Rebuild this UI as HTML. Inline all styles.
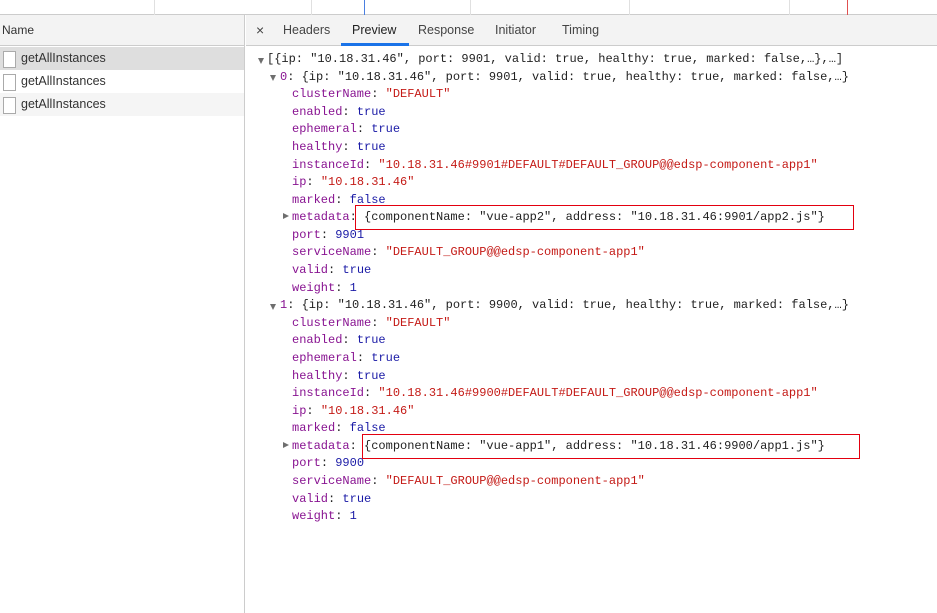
<!DOCTYPE html>
<html><head><meta charset="utf-8"><style>
*{margin:0;padding:0;box-sizing:border-box}
body{width:937px;height:613px;overflow:hidden;background:#fff;font-family:"Liberation Sans",sans-serif;position:relative}
.top{position:absolute;left:0;top:0;width:937px;height:15px;border-bottom:1px solid #ccc;background:#fff}
.vl{position:absolute;top:0;height:15px;width:1px;background:#e0e0e0}
.left{position:absolute;left:0;top:15px;width:245px;height:598px;border-right:1px solid #ccc}
.lh{height:31px;border-bottom:1px solid #ccc;font-size:12px;line-height:31px;padding-left:2px;color:#333;background:#f3f3f3}
.row{height:23px;font-size:12.5px;line-height:23px;color:#333;position:relative;padding-left:21px}
.row:before{content:"";position:absolute;left:3px;top:4px;width:11px;height:15px;border:1px solid #aaa;background:#fff}
.tabs{position:absolute;left:246px;top:15px;right:0;height:31px;border-bottom:1px solid #ccc;background:#f3f3f3;font-size:12.5px;color:#444}
.tab{position:absolute;top:0;line-height:31px}
.l{position:absolute;font-family:"Liberation Mono",monospace;font-size:12px;line-height:17.58px;white-space:pre;color:#222}
.k{color:#881391}.s{color:#c41a16}.n{color:#1a1aa6}
.tri{position:absolute;width:0;height:0}
.dn{border-left:3.5px solid transparent;border-right:3.5px solid transparent;border-top:6px solid #6e6e6e}
.rt{border-top:3.5px solid transparent;border-bottom:3.5px solid transparent;border-left:6px solid #6e6e6e}
.box{position:absolute;border:1px solid #e3000f}
</style></head><body>
<div class="top">
<div class="vl" style="left:154px"></div><div class="vl" style="left:311px"></div><div class="vl" style="left:364px;background:#4a7fe0"></div><div class="vl" style="left:470px"></div><div class="vl" style="left:629px"></div><div class="vl" style="left:789px"></div><div class="vl" style="left:847px;background:#e05050"></div>
</div>
<div class="left">
<div class="lh">Name</div>
<div class="row" style="background:#dedede;margin-top:1px">getAllInstances</div>
<div class="row">getAllInstances</div>
<div class="row" style="background:#f5f5f5">getAllInstances</div>
</div>
<div class="tabs">
<span class="tab" style="left:10px;font-size:14px">×</span>
<span class="tab" style="left:37px">Headers</span>
<span class="tab" style="left:106px;color:#222">Preview</span>
<div style="position:absolute;left:95px;top:28px;width:68px;height:3px;background:#1a73e8"></div>
<span class="tab" style="left:172px">Response</span>
<span class="tab" style="left:249px">Initiator</span>
<span class="tab" style="left:316px">Timing</span>
</div>

<div class="tri dn" style="left:258px;top:58px"></div>
<div class="l" style="left:267px;top:51px">[{ip: "10.18.31.46", port: 9901, valid: true, healthy: true, marked: false,…},…]</div>
<div class="tri dn" style="left:270px;top:75px"></div>
<div class="l" style="left:280px;top:68.6px"><span class="k">0</span>: {ip: "10.18.31.46", port: 9901, valid: true, healthy: true, marked: false,…}</div>
<div class="l" style="left:292px;top:86.2px"><span class="k">clusterName</span>: <span class="s">"DEFAULT"</span>
<span class="k">enabled</span>: <span class="n">true</span>
<span class="k">ephemeral</span>: <span class="n">true</span>
<span class="k">healthy</span>: <span class="n">true</span>
<span class="k">instanceId</span>: <span class="s">"10.18.31.46#9901#DEFAULT#DEFAULT_GROUP@@edsp-component-app1"</span>
<span class="k">ip</span>: <span class="s">"10.18.31.46"</span>
<span class="k">marked</span>: <span class="n">false</span>
<span class="k">metadata</span>: {componentName: "vue-app2", address: "10.18.31.46:9901/app2.js"}
<span class="k">port</span>: <span class="n">9901</span>
<span class="k">serviceName</span>: <span class="s">"DEFAULT_GROUP@@edsp-component-app1"</span>
<span class="k">valid</span>: <span class="n">true</span>
<span class="k">weight</span>: <span class="n">1</span></div>
<div class="tri rt" style="left:283px;top:213px"></div>
<div class="tri dn" style="left:270px;top:304px"></div>
<div class="l" style="left:280px;top:297.2px"><span class="k">1</span>: {ip: "10.18.31.46", port: 9900, valid: true, healthy: true, marked: false,…}</div>
<div class="l" style="left:292px;top:314.8px"><span class="k">clusterName</span>: <span class="s">"DEFAULT"</span>
<span class="k">enabled</span>: <span class="n">true</span>
<span class="k">ephemeral</span>: <span class="n">true</span>
<span class="k">healthy</span>: <span class="n">true</span>
<span class="k">instanceId</span>: <span class="s">"10.18.31.46#9900#DEFAULT#DEFAULT_GROUP@@edsp-component-app1"</span>
<span class="k">ip</span>: <span class="s">"10.18.31.46"</span>
<span class="k">marked</span>: <span class="n">false</span>
<span class="k">metadata</span>: {componentName: "vue-app1", address: "10.18.31.46:9900/app1.js"}
<span class="k">port</span>: <span class="n">9900</span>
<span class="k">serviceName</span>: <span class="s">"DEFAULT_GROUP@@edsp-component-app1"</span>
<span class="k">valid</span>: <span class="n">true</span>
<span class="k">weight</span>: <span class="n">1</span></div>
<div class="tri rt" style="left:283px;top:442px"></div>
<div class="box" style="left:355px;top:205px;width:499px;height:25px"></div>
<div class="box" style="left:362px;top:434px;width:498px;height:25px"></div>
</body></html>
